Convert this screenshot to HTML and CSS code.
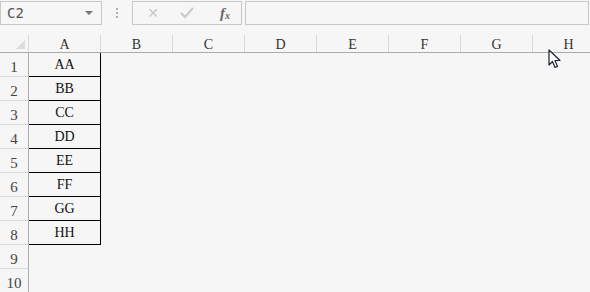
FILE: index.html
```html
<!DOCTYPE html>
<html lang="zh">
<head>
    <meta charset="UTF-8">
    <title>Sheet</title>
    <link rel="stylesheet" href="styles.css">
</head>
<body>

<div class="toolbar">
    <!-- 名称框 -->
    <div class="name-box">
        <span>C2</span>
        <span class="drop"></span>
    </div>
    <div class="dots"><i></i><i></i><i></i></div>
    <div class="fx-box">
        <span class="btn-cancel">&#x2715;</span>
        <span class="btn-ok">
            <svg width="14" height="12" viewBox="0 0 14 12"><path d="M1 6 L5 10 L13 1" fill="none" stroke="#c9c9c9" stroke-width="2"/></svg>
        </span>
        <span class="btn-fx">f<sub>x</sub></span>
    </div>
    <div class="formula-bar"></div>
</div>

<div class="sheet">
    <div class="corner"><span class="tri"></span></div>
    <div class="col-head">A</div>
    <div class="col-head">B</div>
    <div class="col-head">C</div>
    <div class="col-head">D</div>
    <div class="col-head">E</div>
    <div class="col-head">F</div>
    <div class="col-head">G</div>
    <div class="col-head">H</div>
</div>

<div class="rows" id="rows"></div>

<svg class="cursor" width="14" height="20" viewBox="0 0 14 20">
    <path d="M1 1 L1 16 L4.5 12.5 L7 18.5 L9.5 17.5 L7 11.5 L12 11.5 Z" fill="#fff" stroke="#1b1f2e" stroke-width="1.2" stroke-linejoin="round"/>
</svg>

<script>
    const data = ['AA', 'BB', 'CC', 'DD', 'EE', 'FF', 'GG', 'HH', '', ''];
    const rows = document.getElementById('rows');

    // 生成行
    data.forEach(function (text, i) {
        const row = document.createElement('div');
        row.className = 'row';
        let html = '<div class="row-head">' + (i + 1) + '</div>';
        if (text) {
            html += '<div class="cell boxed">' + text + '</div>';
        } else {
            html += '<div class="cell"></div>';
        }
        for (let c = 0; c < 7; c++) {
            html += '<div class="cell"></div>';
        }
        row.innerHTML = html;
        rows.appendChild(row);
    });
</script>

</body>
</html>
```

FILE: styles.css
```css
body {
    margin: 0;
    background-color: #f6f6f6;
    font-family: "Liberation Serif", serif;
    color: #333;
    overflow: hidden;
    width: 590px;
    height: 292px;
}
.toolbar {
    display: flex;
    align-items: flex-start;
    padding-top: 1px;
    height: 34px;
    box-sizing: border-box;
}
.name-box {
    width: 102px;
    height: 24px;
    box-sizing: border-box;
    border: 1px solid #c8c8c8;
    display: flex;
    align-items: center;
    justify-content: space-between;
    padding: 0 8px 0 6px;
    font-family: "DejaVu Sans Mono", monospace;
    font-size: 14px;
    color: #555;
}
.drop {
    width: 0;
    height: 0;
    border-left: 4px solid transparent;
    border-right: 4px solid transparent;
    border-top: 4px solid #777;
}
.dots {
    width: 30px;
    height: 24px;
    display: flex;
    flex-direction: column;
    align-items: center;
    justify-content: center;
    gap: 2px;
}
.dots i {
    width: 2px;
    height: 2px;
    background-color: #b0b0b0;
}
.fx-box {
    width: 110px;
    height: 24px;
    box-sizing: border-box;
    border: 1px solid #c8c8c8;
    display: flex;
    align-items: center;
}
.btn-cancel {
    width: 36px;
    text-align: center;
    color: #c9c9c9;
    font-family: "DejaVu Sans", sans-serif;
    font-size: 14px;
    margin-left: 2px;
}
.btn-ok {
    width: 28px;
    display: flex;
    justify-content: center;
    margin-left: 2px;
}
.btn-fx {
    flex: 1;
    text-align: center;
    font-style: italic;
    font-weight: bold;
    font-size: 15px;
    color: #666;
    padding-left: 8px;
}
.btn-fx sub {
    font-size: 10px;
    vertical-align: -1px;
}
.formula-bar {
    margin-left: 3px;
    flex: 1;
    height: 24px;
    box-sizing: border-box;
    border: 1px solid #c8c8c8;
    margin-right: 1px;
}
.sheet {
    display: flex;
    margin-top: 1px;
    height: 18px;
    box-sizing: border-box;
    border-bottom: 1px solid #ababab;
}
.corner {
    width: 29px;
    flex: none;
    box-sizing: border-box;
    border-right: 1px solid #dadada;
    position: relative;
}
.tri {
    position: absolute;
    right: 3px;
    bottom: 3px;
    width: 0;
    height: 0;
    border-left: 9px solid transparent;
    border-bottom: 9px solid #dcdcdc;
}
.col-head {
    width: 72px;
    flex: none;
    box-sizing: border-box;
    border-right: 1px solid #dadada;
    text-align: center;
    font-size: 14px;
    line-height: 20px;
    color: #333;
}
.row {
    display: flex;
    height: 24px;
}
.row-head {
    width: 29px;
    flex: none;
    box-sizing: border-box;
    border-right: 1px solid #ababab;
    border-bottom: 1px solid #dadada;
    text-align: center;
    font-size: 15px;
    line-height: 28px;
    color: #444;
}
.cell {
    width: 72px;
    flex: none;
    box-sizing: border-box;
    text-align: center;
    font-size: 14px;
    line-height: 24px;
    color: #111;
}
.cell.boxed {
    border-right: 1px solid #000;
    border-bottom: 1px solid #000;
}
.cursor {
    position: absolute;
    left: 548px;
    top: 49px;
}
```
